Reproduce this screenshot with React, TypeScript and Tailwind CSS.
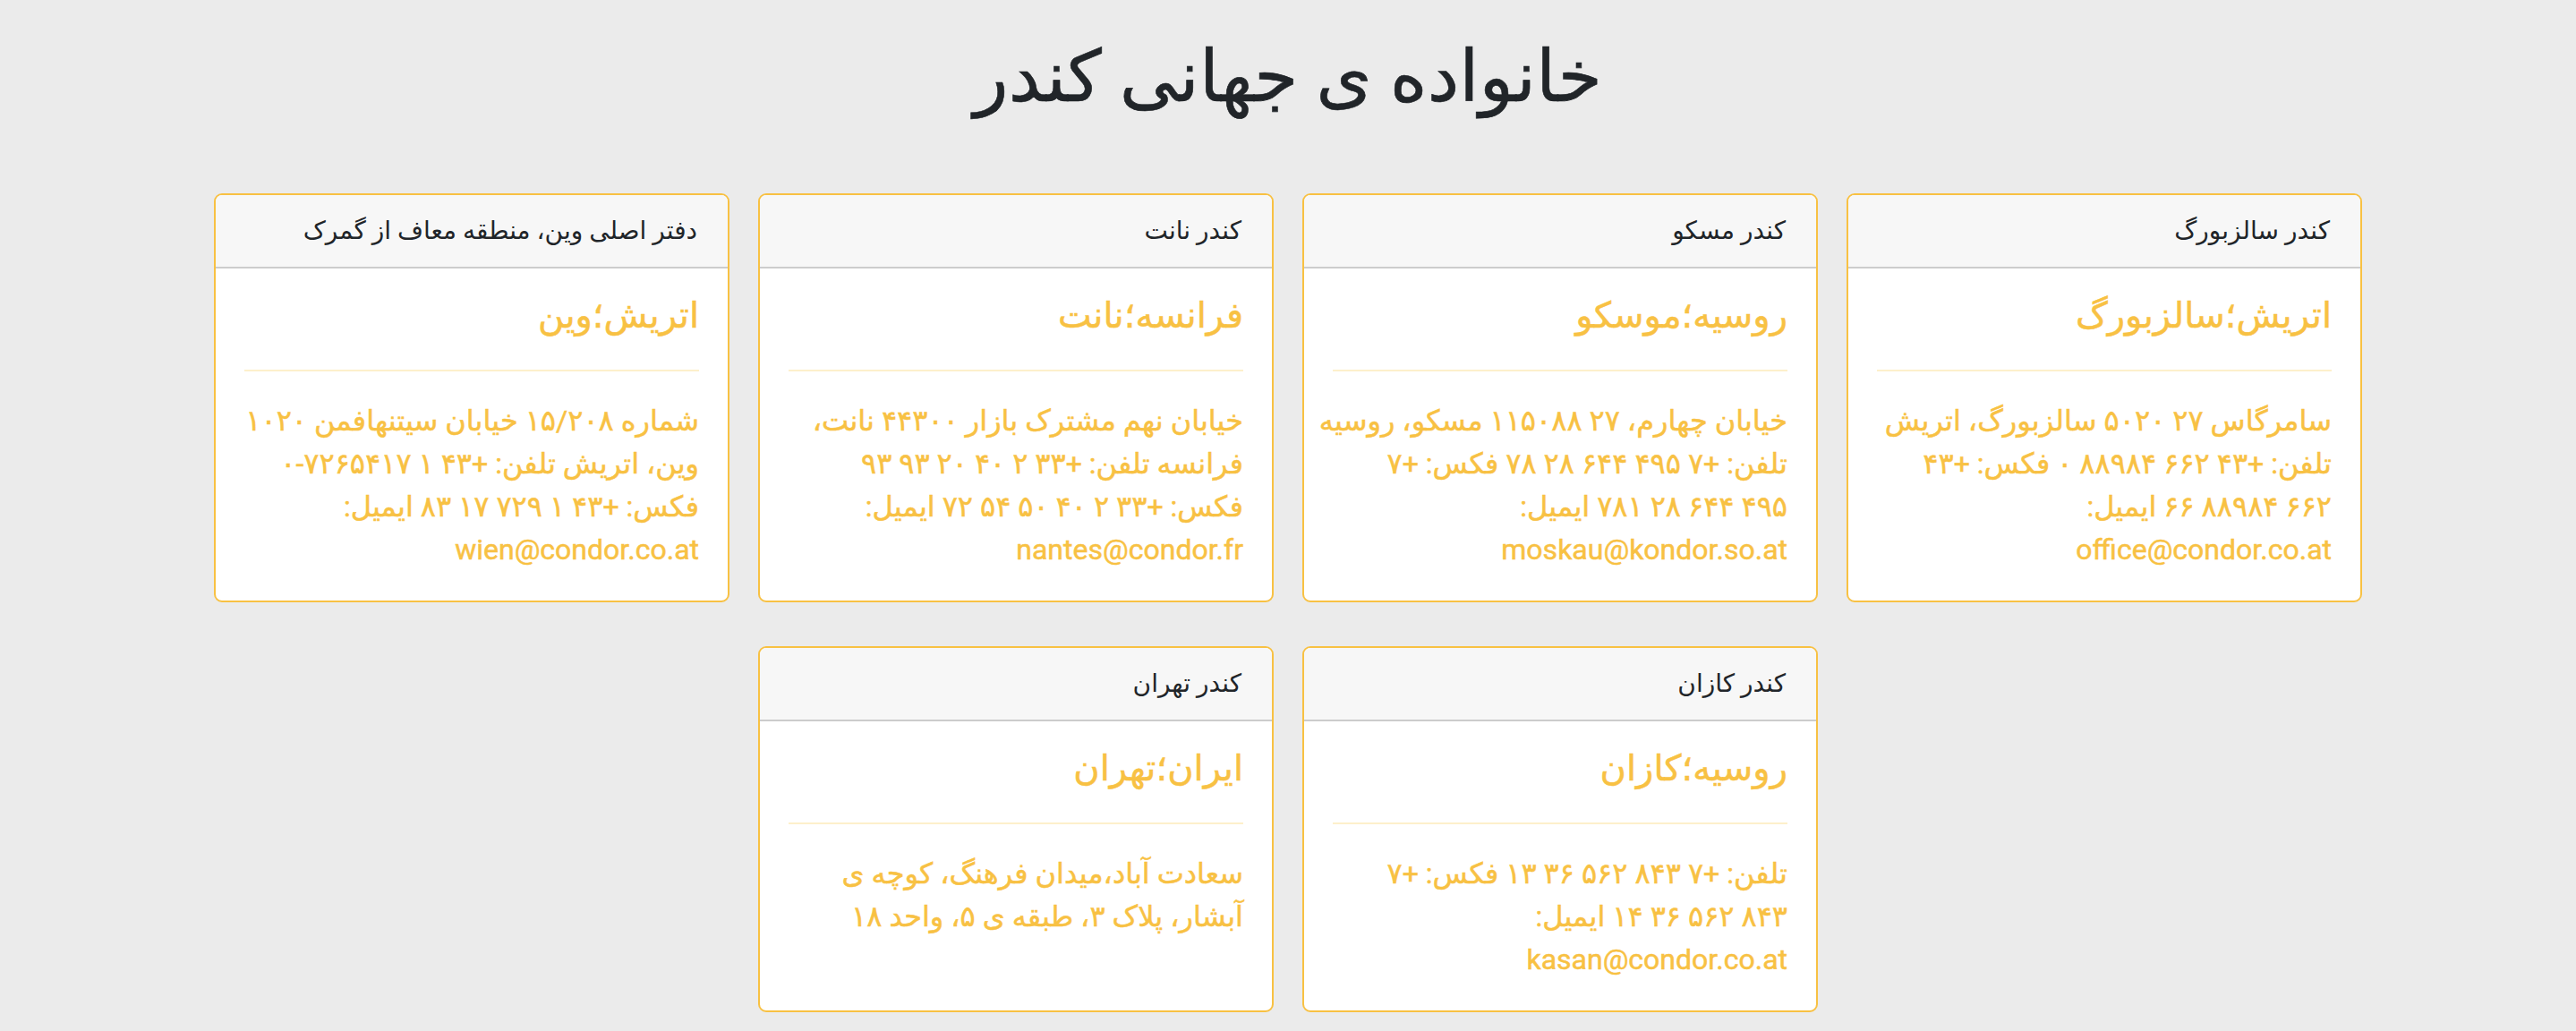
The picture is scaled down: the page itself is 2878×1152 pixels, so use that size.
import React from "react";

type Office = {
  header: string;
  city: string;
  lines: string[];
};

const row1: Office[] = [
  {
    header: "کندر سالزبورگ",
    city: "اتریش؛سالزبورگ",
    lines: [
      "سامرگاس ۲۷ ۵۰۲۰ سالزبورگ، اتریش",
      "تلفن: +۴۳ ۶۶۲ ۸۸۹۸۴ ۰ فکس: +۴۳",
      "۶۶۲ ۸۸۹۸۴ ۶۶ ایمیل:",
      "office@condor.co.at",
    ],
  },
  {
    header: "کندر مسکو",
    city: "روسیه؛موسکو",
    lines: [
      "خیابان چهارم، ۲۷ ۱۱۵۰۸۸ مسکو، روسیه",
      "تلفن: +۷ ۴۹۵ ۶۴۴ ۲۸ ۷۸ فکس: +۷",
      "۴۹۵ ۶۴۴ ۲۸ ۷۸۱ ایمیل:",
      "moskau@kondor.so.at",
    ],
  },
  {
    header: "کندر نانت",
    city: "فرانسه؛نانت",
    lines: [
      "خیابان نهم مشترک بازار ۴۴۳۰۰ نانت،",
      "فرانسه تلفن: +۳۳ ۲ ۴۰ ۲۰ ۹۳ ۹۳",
      "فکس: +۳۳ ۲ ۴۰ ۵۰ ۵۴ ۷۲ ایمیل:",
      "nantes@condor.fr",
    ],
  },
  {
    header: "دفتر اصلی وین، منطقه معاف از گمرک",
    city: "اتریش؛وین",
    lines: [
      "شماره ۱۵/۲۰۸ خیابان سیتنهافمن ۱۰۲۰",
      "وین، اتریش تلفن: +۴۳ ۱ ۷۲۶۵۴۱۷-۰",
      "فکس: +۴۳ ۱ ۷۲۹ ۱۷ ۸۳ ایمیل:",
      "wien@condor.co.at",
    ],
  },
];

const kazan: Office = {
  header: "کندر کازان",
  city: "روسیه؛کازان",
  lines: [
    "تلفن: +۷ ۸۴۳ ۵۶۲ ۳۶ ۱۳ فکس: +۷",
    "۸۴۳ ۵۶۲ ۳۶ ۱۴ ایمیل:",
    "kasan@condor.co.at",
  ],
};

const tehran: Office = {
  header: "کندر تهران",
  city: "ایران؛تهران",
  lines: ["سعادت آباد،میدان فرهنگ، کوچه ی", "آبشار، پلاک ۳، طبقه ی ۵، واحد ۱۸"],
};

function Card({ o, className = "" }: { o: Office; className?: string }) {
  return (
    <div
      className={
        "flex flex-col bg-white border-2 border-[#f8c143] rounded-[9px] overflow-hidden " +
        className
      }
    >
      <div className="h-[82px] flex items-center px-[34px] bg-[#f7f7f7] border-b-2 border-[#cccccc] text-[28px] leading-[42px] text-[#212529] whitespace-nowrap">
        {o.header}
      </div>
      <div className="flex-1 px-[32px] pt-[29px] pb-[33px] text-[#f8c143] [-webkit-text-stroke:0.5px_#f8c143]">
        <h4 className="text-[40px] leading-[48px] m-0">{o.city}</h4>
        <hr className="mt-[36px] mb-[31px] border-0 border-t-2 border-[#fdf0cb]" />
        <div className="text-[32px] leading-[48px]">
          {o.lines.map((l, i) => (
            <div key={i} className="whitespace-nowrap">
              {l}
            </div>
          ))}
        </div>
      </div>
    </div>
  );
}

export default function App() {
  return (
    <div
      dir="rtl"
      className="min-h-[1152px] w-full bg-[#ebebeb] pt-[38px] font-['Roboto','DejaVu_Sans',sans-serif]"
    >
      <h1 className="text-center text-[80px] leading-[96px] font-normal text-[#212529] m-0 [-webkit-text-stroke:0.6px_#212529]">
        خانواده ی جهانی کندر
      </h1>
      <div className="w-[2400px] mx-auto mt-[82px]">
        <div className="grid grid-cols-4 gap-x-[32px]">
          {row1.map((o, i) => (
            <Card key={i} o={o} />
          ))}
        </div>
        <div className="grid grid-cols-4 gap-x-[32px] mt-[49px]">
          <Card o={kazan} className="col-start-2" />
          <Card o={tehran} className="col-start-3" />
        </div>
      </div>
    </div>
  );
}
